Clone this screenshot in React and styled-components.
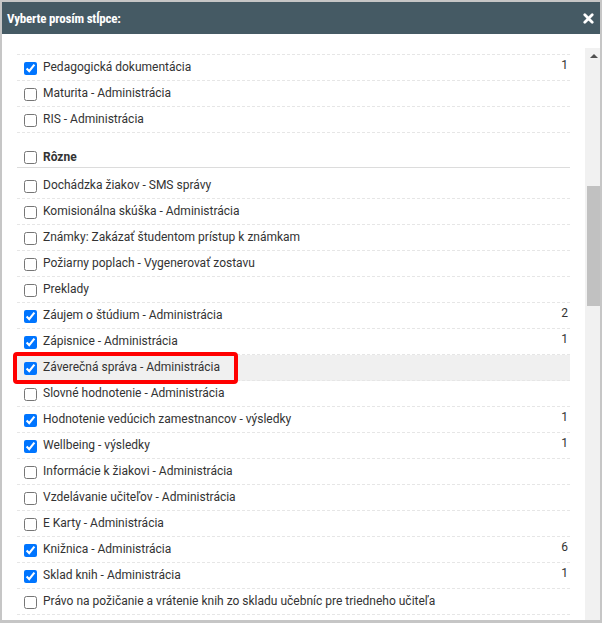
import React from "react";
import styled, { createGlobalStyle } from "styled-components";

const GlobalStyle = createGlobalStyle`
  html, body {
    margin: 0;
    padding: 0;
    background: #fff;
  }
  body {
    font-family: Roboto, "Liberation Sans", Arial, sans-serif;
    font-size: 12px;
    color: #333;
  }
  * { box-sizing: border-box; }
`;

const Dialog = styled.div`
  width: 602px;
  height: 623px;
  border: 2px solid #c6c6c6;
  border-bottom-width: 3px;
  display: flex;
  flex-direction: column;
  background: #fff;
`;

const Header = styled.div`
  height: 32px;
  flex-shrink: 0;
  background: #455a64;
  color: #fff;
  display: flex;
  align-items: center;
  justify-content: space-between;
  padding: 0 6px 0 5px;
`;

const Title = styled.span`
  font-family: "Roboto Condensed", Roboto, "Liberation Sans", sans-serif;
  font-stretch: 85%;
  font-weight: 700;
  font-size: 13px;
  letter-spacing: -0.2px;
`;

const Close = styled.svg`
  width: 11px;
  height: 11px;
  display: block;
`;

const Body = styled.div`
  flex: 1;
  min-height: 0;
  padding-top: 14px;
  display: flex;
`;

const Viewport = styled.div`
  flex: 1;
  overflow: hidden;
  padding: 6px 15px 0 15px;
`;

const List = styled.div`
  border-top: 1px dashed #e6e6e6;
`;

const Row = styled.div`
  position: relative;
  height: 26px;
  display: flex;
  align-items: center;
  padding: 0 2px 0 7px;
  border-bottom: 1px dashed #e6e6e6;
  background: ${({ $active }) => ($active ? "#f0f0f0" : "transparent")};
`;

const GroupRow = styled.div`
  height: 35px;
  display: flex;
  align-items: center;
  padding: 14px 2px 0 7px;
  border-bottom: 1px solid #dcdcdc;
  margin-bottom: 5px;
  font-weight: 700;
`;

const Check = styled.input.attrs({ type: "checkbox", readOnly: true })`
  width: 13px;
  height: 13px;
  margin: 1px 6px 0 0;
  flex-shrink: 0;
`;

const Label = styled.span`
  flex: 1;
  white-space: nowrap;
  padding-bottom: 1px;
`;

const Count = styled.span`
  align-self: flex-start;
  padding-top: 3px;
  color: #333;
`;

const Marker = styled.div`
  position: absolute;
  left: -4px;
  top: -3px;
  width: 225px;
  height: 32px;
  border: 4px solid #ff0000;
  border-radius: 4px;
  pointer-events: none;
`;

const Scrollbar = styled.div`
  width: 15px;
  flex-shrink: 0;
  background: #f1f1f1;
  display: flex;
  flex-direction: column;
`;

const ArrowUp = styled.div`
  height: 15px;
  display: flex;
  align-items: center;
  justify-content: center;
  &::after {
    content: "";
    border-left: 4px solid transparent;
    border-right: 4px solid transparent;
    border-bottom: 4px solid #505050;
    margin-left: 2px;
  }
`;

const Thumb = styled.div`
  height: 120px;
  margin: 123px 0 0 2px;
  background: #c1c1c1;
`;

const top = [
  { label: "Pedagogická dokumentácia", checked: true, count: 1 },
  { label: "Maturita - Administrácia" },
  { label: "RIS - Administrácia" },
];

const misc = [
  { label: "Dochádzka žiakov - SMS správy" },
  { label: "Komisionálna skúška - Administrácia" },
  { label: "Známky: Zakázať študentom prístup k známkam" },
  { label: "Požiarny poplach - Vygenerovať zostavu" },
  { label: "Preklady" },
  { label: "Záujem o štúdium - Administrácia", checked: true, count: 2 },
  { label: "Zápisnice - Administrácia", checked: true, count: 1 },
  { label: "Záverečná správa - Administrácia", checked: true, active: true },
  { label: "Slovné hodnotenie - Administrácia" },
  { label: "Hodnotenie vedúcich zamestnancov - výsledky", checked: true, count: 1 },
  { label: "Wellbeing - výsledky", checked: true, count: 1 },
  { label: "Informácie k žiakovi - Administrácia" },
  { label: "Vzdelávanie učiteľov - Administrácia" },
  { label: "E Karty - Administrácia" },
  { label: "Knižnica - Administrácia", checked: true, count: 6 },
  { label: "Sklad knih - Administrácia", checked: true, count: 1 },
  { label: "Právo na požičanie a vrátenie knih zo skladu učebníc pre triedneho učiteľa" },
];

function Item({ item }) {
  return (
    <Row $active={item.active}>
      <Check checked={!!item.checked} />
      <Label>{item.label}</Label>
      {item.count && <Count>{item.count}</Count>}
      {item.active && <Marker />}
    </Row>
  );
}

export default function App() {
  return (
    <>
      <GlobalStyle />
      <Dialog>
        <Header>
          <Title>Vyberte prosím stĺpce:</Title>
          <Close viewBox="0 0 11 11">
            <path d="M1.8 1.8 L9.2 9.2 M9.2 1.8 L1.8 9.2" stroke="#fff" strokeWidth="2.8" strokeLinecap="round" />
          </Close>
        </Header>
        <Body>
          <Viewport>
            <List>
              {top.map((it) => <Item key={it.label} item={it} />)}
              <GroupRow>
                <Check checked={false} />
                <Label>Rôzne</Label>
              </GroupRow>
              {misc.map((it) => <Item key={it.label} item={it} />)}
            </List>
          </Viewport>
          <Scrollbar>
            <ArrowUp />
            <Thumb />
          </Scrollbar>
        </Body>
      </Dialog>
    </>
  );
}
